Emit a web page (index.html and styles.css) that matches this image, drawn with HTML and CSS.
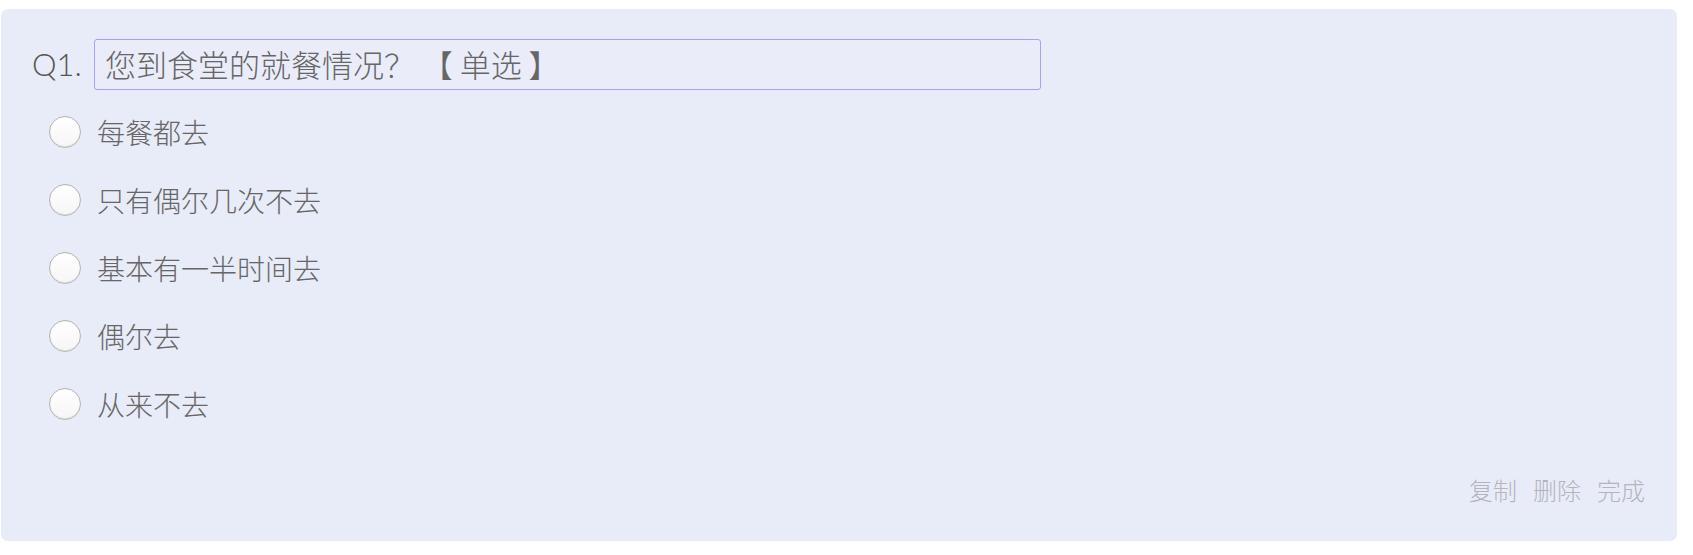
FILE: index.html
```html
<!DOCTYPE html>
<html lang="zh-CN">
<head>
<meta charset="utf-8">
<title>问卷题目</title>
<link rel="stylesheet" href="styles.css">
</head>
<body>
<div class="card">
  <div class="question">
    <span class="qnum">Q1.</span>
    <div class="qtitle">您到食堂的就餐情况？ 【 单选 】</div>
  </div>
  <ul class="options">
    <li class="option"><span class="radio"></span><span class="label">每餐都去</span></li>
    <li class="option"><span class="radio"></span><span class="label">只有偶尔几次不去</span></li>
    <li class="option"><span class="radio"></span><span class="label">基本有一半时间去</span></li>
    <li class="option"><span class="radio"></span><span class="label">偶尔去</span></li>
    <li class="option"><span class="radio"></span><span class="label">从来不去</span></li>
  </ul>
  <div class="actions">
    <span class="action">复制</span>
    <span class="action">删除</span>
    <span class="action">完成</span>
  </div>
</div>
</body>
</html>
```
FILE: styles.css
```css
html, body {
  margin: 0;
  padding: 0;
  background: #ffffff;
}
body {
  font-family: "Noto Sans CJK SC", "Noto Sans", sans-serif;
  font-weight: 300;
  color: #666666;
}
.card {
  margin: 9px 16px 0 1px;
  width: 1676px;
  box-sizing: border-box;
  height: 532px;
  background: #e8ecf8;
  border-radius: 7px;
  padding: 30px 32px 0 31px;
  display: flex;
  flex-direction: column;
}
.question {
  display: flex;
  align-items: center;
}
.qnum {
  width: 62px;
  font-family: "Lato", "Noto Sans", sans-serif;
  font-weight: 300;
  font-size: 31px;
  color: #555555;
  line-height: 51px;
}
.qtitle {
  width: 947px;
  height: 51px;
  box-sizing: border-box;
  border: 1px solid #a3a3f3;
  border-radius: 3px;
  background: #eaedf9;
  padding: 0 10px;
  font-size: 31px;
  line-height: 48px;
  color: #666666;
  white-space: nowrap;
}
.options {
  list-style: none;
  margin: 8px 0 0 0;
  padding: 0 0 0 17px;
}
.option {
  display: flex;
  align-items: center;
  height: 68px;
  gap: 16px;
}
.radio {
  width: 32px;
  height: 32px;
  box-sizing: border-box;
  border-radius: 50%;
  border: 1px solid #b4b4b4;
  background: linear-gradient(#ffffff, #f6f6f6);
  box-shadow: inset 0 -1px 1px rgba(0,0,0,0.08);
  flex: none;
}
.label {
  font-size: 28px;
  color: #666666;
}
.actions {
  margin-top: 35px;
  display: flex;
  justify-content: flex-end;
  gap: 16px;
  height: 32px;
  align-items: center;
}
.action {
  font-size: 24px;
  color: #b4b4bc;
}
```
